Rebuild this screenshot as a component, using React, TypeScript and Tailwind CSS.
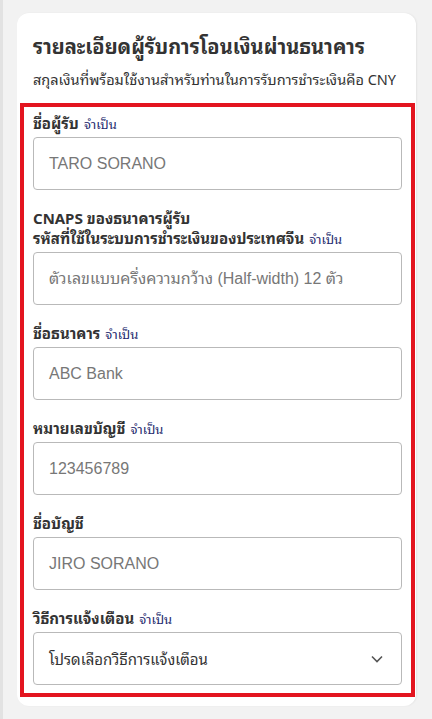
import React from "react";

const FONT = "font-['Tahoma','Noto_Sans_Thai_Looped','Loma','Garuda','Liberation_Sans',sans-serif]";

type Field = {
  label: React.ReactNode;
  required?: boolean;
  placeholder: string;
};

const FIELDS: Field[] = [
  { label: "ชื่อผู้รับ", required: true, placeholder: "TARO SORANO" },
  {
    label: (
      <>
        CNAPS ของธนาคารผู้รับ
        <br />
        รหัสที่ใช้ในระบบการชำระเงินของประเทศจีน
      </>
    ),
    required: true,
    placeholder: "ตัวเลขแบบครึ่งความกว้าง (Half-width) 12 ตัว",
  },
  { label: "ชื่อธนาคาร", required: true, placeholder: "ABC Bank" },
  { label: "หมายเลขบัญชี", required: true, placeholder: "123456789" },
  { label: "ชื่อบัญชี", placeholder: "JIRO SORANO" },
];

function Label({ children, required }: { children: React.ReactNode; required?: boolean }) {
  return (
    <p className="text-[15px] leading-[20px] font-bold text-[#333]">
      {children}
      {required && (
        <span className="ml-[5px] text-[13px] leading-none font-normal text-[#1e2a6e]">จำเป็น</span>
      )}
    </p>
  );
}

export default function App() {
  return (
    <div className={`min-h-[719px] bg-[#f2f2f2] border-l-[3px] border-[#e2e2e2] pt-[13px] pb-[12px] ${FONT}`}>
      <div className="ml-[14px] w-[399px] rounded-[12px] bg-white pt-[18px] pb-[9px] px-[3px] shadow-[1px_0_2px_rgba(0,0,0,0.06)]">
        <h1 className="px-[13px] text-[20px] leading-[28px] font-bold text-[#333]">
          รายละเอียดผู้รับการโอนเงินผ่านธนาคาร
        </h1>
        <p className="mt-[10px] px-[13px] text-[14.5px] leading-[20px] text-[#333] whitespace-nowrap">
          สกุลเงินที่พร้อมใช้งานสำหรับท่านในการรับการชำระเงินคือ CNY
        </p>

        <div className="mt-[14px] w-[395px] border-4 border-[#e3151f] px-[9px] pt-[5px] pb-[8px]">
          {FIELDS.map((f, i) => (
            <div key={i} className={i === 0 ? "" : "mt-[17px]"}>
              <Label required={f.required}>{f.label}</Label>
              <div className="mt-[5px] h-[53px] rounded-[4px] border border-[#b9b9b9] flex items-center px-[15px]">
                <span className="text-[16px] text-[#777] font-['Liberation_Sans','Tahoma','Noto_Sans_Thai_Looped','Loma','Garuda',sans-serif]">
                  {f.placeholder}
                </span>
              </div>
            </div>
          ))}

          <div className="mt-[17px]">
            <Label required>วิธีการแจ้งเตือน</Label>
            <div className="mt-[5px] h-[53px] rounded-[4px] border border-[#b9b9b9] flex items-center justify-between pl-[15px] pr-[18px]">
              <span className="text-[15px] text-[#333]">โปรดเลือกวิธีการแจ้งเตือน</span>
              <svg width="12" height="8" viewBox="0 0 12 8" fill="none">
                <path d="M1 1.5l5 5 5-5" stroke="#555" strokeWidth="1.6" />
              </svg>
            </div>
          </div>
        </div>
      </div>
    </div>
  );
}
